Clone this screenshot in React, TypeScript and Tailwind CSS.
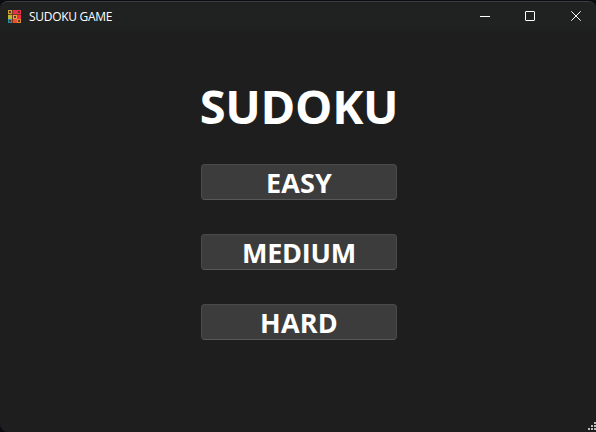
const levels = [
  { name: 'EASY', tracking: 'tracking-[0.1px]' },
  { name: 'MEDIUM', tracking: 'tracking-[-0.2px]' },
  { name: 'HARD', tracking: 'tracking-[0.2px]' },
];

function AppIcon() {
  const cells = [
    ['#c9a32b', '#e8304a', '#e8304a'],
    ['#b8bd36', '#e8a33a', '#e8304a'],
    ['#2b8fa8', '#e8502e', '#d88a2c'],
  ];
  return (
    <svg className="mt-px" width="13" height="13" viewBox="0 0 13 13" shapeRendering="crispEdges">
      <rect width="13" height="13" fill="#7a3a20" />
      {cells.map((row, r) =>
        row.map((fill, c) => (
          <g key={`${r}-${c}`}>
            <rect x={c * 4.5} y={r * 4.5} width="4" height="4" fill={fill} />
            {(r + c) % 2 === 0 && <rect x={c * 4.5 + 1} y={r * 4.5 + 1} width="2" height="2" fill="#5c3428" />}
          </g>
        )),
      )}
    </svg>
  );
}

function TitleBar() {
  return (
    <header className="flex h-[31px] shrink-0 items-center bg-linear-to-b from-[#202221] from-80% to-[#1e1e1e] pb-[3px] pl-2">
      <AppIcon />
      <span className="ml-2 mt-[2px] whitespace-nowrap text-[12px] leading-4 tracking-[-0.3px] text-white">SUDOKU GAME</span>
      <div className="ml-auto flex h-full items-center text-white">
        <button aria-label="Minimize" className="flex w-[46px] justify-center">
          <svg width="10" height="10" viewBox="0 0 10 10"><path d="M0 5.5H10" stroke="currentColor" /></svg>
        </button>
        <button aria-label="Maximize" className="flex w-[44px] justify-center">
          <svg width="10" height="10" viewBox="0 0 10 10"><rect x=".5" y=".5" width="9" height="9" rx=".4" fill="none" stroke="currentColor" /></svg>
        </button>
        <button aria-label="Close" className="flex w-[44px] justify-center pl-[4px]">
          <svg width="10" height="10" viewBox="0 0 10 10"><path d="M.3.3 9.7 9.7M9.7.3.3 9.7" stroke="currentColor" /></svg>
        </button>
      </div>
    </header>
  );
}

function SizeGrip() {
  return (
    <svg className="ml-auto" width="8" height="8" viewBox="0 0 8 8" fill="#bdbdbd" shapeRendering="crispEdges">
      <path d="M6 0h2v2H6zM3 3h2v2H3zM6 3h2v2H6zM0 6h2v2H0zM3 6h2v2H3zM6 6h2v2H6z" />
    </svg>
  );
}

export default function App() {
  return (
    <div className="h-[432px] w-[596px] overflow-hidden bg-[#0b0b12] pt-px font-['Open_Sans','Noto_Sans',sans-serif]">
      <div className="flex h-[431px] flex-col overflow-hidden rounded-t-lg rounded-bl-lg border-t border-[#3d3d40] bg-[#1e1e1e]">
        <TitleBar />
        <main className="flex flex-1 flex-col items-center pl-[2px]">
          <h1 className="mt-[41px] whitespace-nowrap text-[47px] font-bold leading-[64px] tracking-[-0.3px] text-white">SUDOKU</h1>
          <div className="mt-[26px] flex flex-col gap-[34px]">
            {levels.map(({ name, tracking }) => (
              <button
                key={name}
                className="flex h-9 w-[196px] items-center justify-center rounded-[4px] border border-[#4a4a4a] border-b-[#585858] bg-[#3c3c3c] pt-[2px] text-[27px] font-bold leading-9 text-white"
              >
                <span className={tracking}>{name}</span>
              </button>
            ))}
          </div>
        </main>
        <div className="flex pb-[2px]"><SizeGrip /></div>
      </div>
    </div>
  );
}
